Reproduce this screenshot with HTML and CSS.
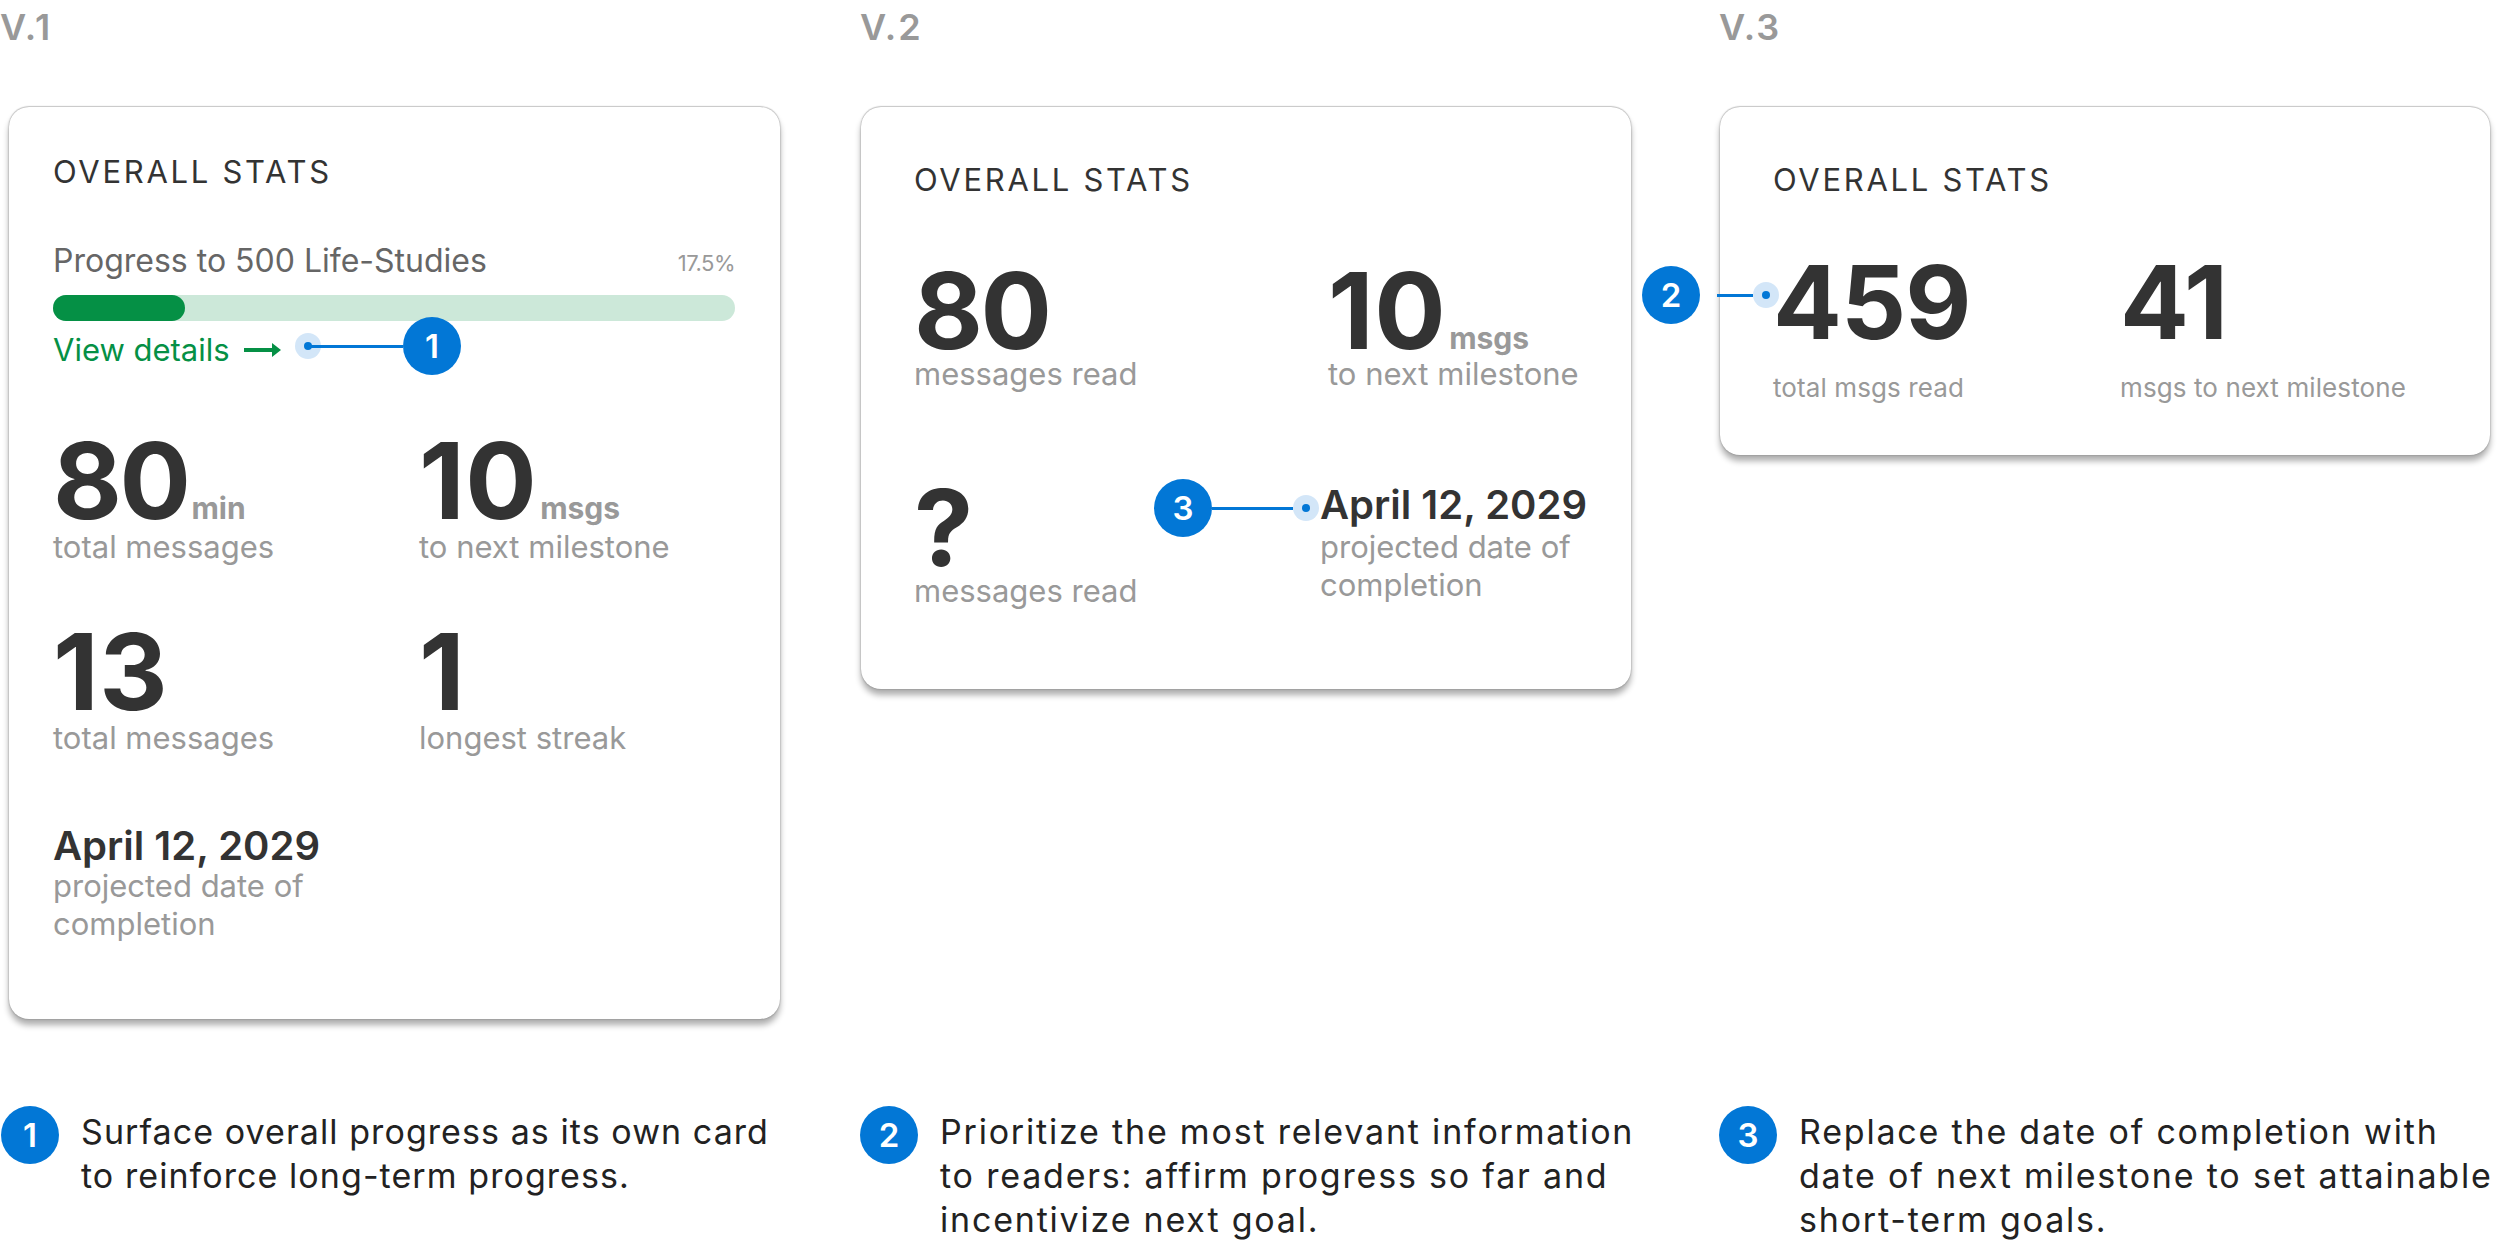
FILE: index.html
```html
<!DOCTYPE html>
<html lang="en">
<head>
<meta charset="utf-8">
<title>Overall stats versions</title>
<link rel="stylesheet" href="styles.css">
</head>
<body>
<main class="board">
  <div class="version">V.1</div>
  <div class="version indent">V.2</div>
  <div class="version indent">V.3</div>

  <section class="card card-one">
    <h2 class="card-title">OVERALL STATS</h2>
    <div class="progress-head">
      <span class="progress-name">Progress to 500 Life-Studies</span>
      <span class="progress-pct">17.5%</span>
    </div>
    <div class="bar"><div class="bar-fill"></div></div>
    <div class="details">
      <span>View details</span>
      <svg class="arrow" width="37" height="16" viewBox="0 0 37 16"><path d="M0 8H29" stroke="#059045" stroke-width="4" fill="none"/><path d="M28 1L37 8L28 15Z" fill="#059045"/></svg>
    </div>
    <div class="stats stats-one">
      <div><div class="value tight">80<span class="unit">min</span></div><div class="label">total messages</div></div>
      <div><div class="value">10<span class="unit">msgs</span></div><div class="label">to next milestone</div></div>
      <div><div class="value">13</div><div class="label">total messages</div></div>
      <div><div class="value">1</div><div class="label">longest streak</div></div>
      <div class="date-cell"><div class="date">April 12, 2029</div><div class="label">projected date of completion</div></div>
    </div>
    <div class="callout callout-one"><span class="dot"></span><span class="wire wire-one"></span><span class="badge">1</span></div>
  </section>

  <section class="card card-two indent-card">
    <h2 class="card-title">OVERALL STATS</h2>
    <div class="stats stats-two">
      <div><div class="value tight">80</div><div class="label">messages read</div></div>
      <div><div class="value">10<span class="unit">msgs</span></div><div class="label">to next milestone</div></div>
      <div class="question"><div class="value">?</div><div class="label">messages read</div></div>
      <div class="date-cell-two"><div class="date">April 12, 2029</div><div class="label">projected date of completion</div></div>
    </div>
    <div class="callout callout-three"><span class="badge">3</span><span class="wire wire-three"></span><span class="dot"></span></div>
  </section>

  <section class="card card-three indent-card">
    <h2 class="card-title">OVERALL STATS</h2>
    <div class="stats stats-three">
      <div><div class="value value-wide">459</div><div class="label label-small">total msgs read</div></div>
      <div><div class="value value-wide">41</div><div class="label label-small">msgs to next milestone</div></div>
    </div>
    <div class="callout callout-two"><span class="badge">2</span><span class="wire wire-two"></span><span class="dot"></span></div>
  </section>

  <div class="note note-one"><span class="badge">1</span><p>Surface overall progress as its own card<br>to reinforce long-term progress.</p></div>
  <div class="note note-wide"><span class="badge">2</span><p>Prioritize the most relevant information<br>to readers: affirm progress so far and<br>incentivize next goal.</p></div>
  <div class="note note-wide"><span class="badge">3</span><p>Replace the date of completion with<br>date of next milestone to set attainable<br>short-term goals.</p></div>
</main>
</body>
</html>
```
FILE: styles.css
```css
* { box-sizing: border-box; }
html, body { margin: 0; padding: 0; background: #fff; }
body { font-family: Inter, "Liberation Sans", sans-serif; color: #333; overflow: hidden; height: 1240px; }

.board {
  display: grid;
  grid-template-columns: 860px 859px 781px;
  align-items: start;
  padding-top: 7px;
}

.version {
  font-size: 36px;
  font-weight: 600;
  line-height: 40px;
  color: #999;
  letter-spacing: 2px;
  margin-bottom: 60px;
}
.version.indent { padding-left: 0; }

.card {
  position: relative;
  background: #fff;
  border-radius: 20px;
  box-shadow: 0 -1px 1px rgba(0,0,0,.14), 0 0 2px rgba(0,0,0,.32), 0 6px 6px rgba(0,0,0,.32);
}
.card-one { margin-left: 9px; width: 771px; height: 912px; padding: 45px 44px 0; }
.card-two { height: 582px; padding: 53px 53px 0; }
.card-three { height: 348px; padding: 53px 53px 0; }
.indent-card { margin-left: 1px; width: 770px; }

.card-title {
  margin: 0;
  font-size: 31px;
  line-height: 40px;
  font-weight: 400;
  color: #333;
  letter-spacing: 2.7px;
}

.progress-head {
  display: flex;
  justify-content: space-between;
  align-items: center;
  margin-top: 48px;
  height: 40px;
  width: 682px;
}
.progress-name { font-size: 32px; color: #666; }
.progress-pct { font-size: 22px; color: #999; margin-top: 6px; letter-spacing: -0.5px; }

.bar {
  width: 682px;
  height: 26px;
  margin-top: 15px;
  border-radius: 13px;
  background: #cce8d9;
}
.bar-fill { width: 132px; height: 26px; border-radius: 13px; background: #059045; }

.details {
  display: flex;
  align-items: center;
  gap: 14px;
  margin-top: 8px;
  height: 40px;
  font-size: 31px;
  color: #059045;
}
.arrow { margin-top: 1px; }

.stats { display: grid; align-items: start; }
.stats-one { grid-template-columns: 366px 1fr; row-gap: 66px; margin-top: 72px; }
.stats-two { grid-template-columns: 414px 1fr; margin-top: 71px; row-gap: 0; }
.stats-three { grid-template-columns: 347px 1fr; margin-top: 65px; }

.value {
  font-size: 106px;
  line-height: 80px;
  font-weight: 700;
  color: #333;
  letter-spacing: 0.5px;
  white-space: nowrap;
}
.value.tight { letter-spacing: -2.5px; }
.value-wide { font-size: 102px; line-height: 74px; letter-spacing: -1px; }
.unit {
  font-size: 30px;
  line-height: 0;
  font-weight: 700;
  color: #999;
  letter-spacing: 0;
  margin-left: 3px;
}
.label {
  margin-top: 7px;
  font-size: 31px;
  line-height: 38px;
  color: #999;
}
.label-small { font-size: 26px; line-height: 34px; margin-top: 32px; letter-spacing: 0.1px; }

.date-cell { grid-column: 1; width: 300px; }
.date { font-size: 40px; line-height: 46px; font-weight: 600; color: #333; white-space: nowrap; }
.date + .label { margin-top: -2px; }

.stats-two .label { margin-top: 4px; }
.question { margin-top: 95px; }
.date-cell-two { margin-top: 89px; margin-left: -8px; width: 300px; }
.stats-two .date + .label { margin-top: 0; }

.callout { position: absolute; display: flex; align-items: center; }
.callout-one { left: 286px; top: 210px; }
.callout-three { left: 293px; top: 372px; }
.callout-two { left: -78px; top: 159px; }

.badge {
  flex: none;
  display: flex;
  align-items: center;
  justify-content: center;
  width: 58px;
  height: 58px;
  border-radius: 50%;
  background: #0277d6;
  color: #fff;
  font-size: 33px;
  font-weight: 600;
}
.dot {
  flex: none;
  position: relative;
  width: 26px;
  height: 26px;
  border-radius: 50%;
  background: #d3e6f8;
}
.dot::after {
  content: "";
  position: absolute;
  left: 9px;
  top: 9px;
  width: 8px;
  height: 8px;
  border-radius: 50%;
  background: #0277d6;
}
.wire { flex: none; height: 3px; background: #0277d6; }
.wire-one { width: 95px; margin-left: -13px; position: relative; }
.wire-three { width: 81px; }
.wire-two { width: 36px; margin-left: 17px; }

.note { display: flex; gap: 22px; margin-top: 87px; }
.note-one { padding-left: 1px; }
.note p {
  margin: 4px 0 0;
  font-size: 34px;
  line-height: 44px;
  color: #222;
  letter-spacing: 1.07px;
  white-space: nowrap;
}
.note-wide p { letter-spacing: 1.8px; }
```
